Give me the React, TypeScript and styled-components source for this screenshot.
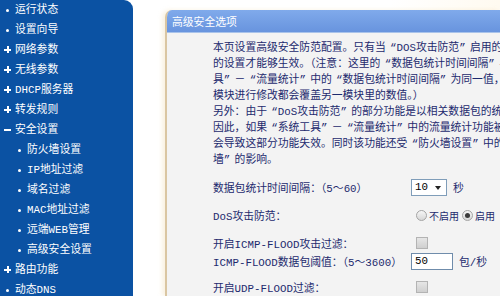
import React from 'react';
import styled, { createGlobalStyle, css } from 'styled-components';

const GlobalStyle = createGlobalStyle`
  html, body {
    margin: 0;
    padding: 0;
    background: #ffffff;
  }
  body {
    font-family: "Liberation Mono", "Noto Sans CJK SC", monospace;
    font-size: 10.8px;
  }
`;

type Mark = 'dot' | 'plus' | 'minus';

interface MenuEntry {
  label: string;
  mark: Mark;
  sub?: boolean;
}

const menu: MenuEntry[] = [
  { label: '运行状态', mark: 'dot' },
  { label: '设置向导', mark: 'dot' },
  { label: '网络参数', mark: 'plus' },
  { label: '无线参数', mark: 'plus' },
  { label: 'DHCP服务器', mark: 'plus' },
  { label: '转发规则', mark: 'plus' },
  { label: '安全设置', mark: 'minus' },
  { label: '防火墙设置', mark: 'dot', sub: true },
  { label: 'IP地址过滤', mark: 'dot', sub: true },
  { label: '域名过滤', mark: 'dot', sub: true },
  { label: 'MAC地址过滤', mark: 'dot', sub: true },
  { label: '远端WEB管理', mark: 'dot', sub: true },
  { label: '高级安全设置', mark: 'dot', sub: true },
  { label: '路由功能', mark: 'plus' },
  { label: '动态DNS', mark: 'dot' },
];

const notice = [
  '本页设置高级安全防范配置。只有当“DOS攻击防范”启用的时候，这里',
  '的设置才能够生效。（注意：这里的“数据包统计时间间隔”与“系统工',
  '具”－“流量统计”中的“数据包统计时间间隔”为同一值，在任何一个',
  '模块进行修改都会覆盖另一模块里的数值。）',
  '另外：由于“DoS攻击防范”的部分功能是以相关数据包的统计为基础，',
  '因此，如果“系统工具”－“流量统计”中的流量统计功能被关闭，将',
  '会导致这部分功能失效。同时该功能还受“防火墙设置”中的“防火',
  '墙”的影响。',
];

// curly quotes get a full-width cell, as the old SimSun pages show them
const withWideQuotes = (text: string) =>
  text.split(/([“”])/).map((part, i) =>
    part === '“' || part === '”' ? (
      <Quote key={i} $open={part === '“'}>
        {part}
      </Quote>
    ) : (
      part
    )
  );

const App: React.FC = () => {
  return (
    <>
      <GlobalStyle />
      <Page>
        <Sidebar>
          {menu.map((item) => (
            <MenuItem key={item.label} $sub={item.sub}>
              <MarkIcon $mark={item.mark} />
              <span>{item.label}</span>
            </MenuItem>
          ))}
        </Sidebar>

        <Main>
          <Panel>
            <PanelHeader>高级安全选项</PanelHeader>
            <PanelBody>
              <Notice>
                {notice.map((line) => (
                  <Line key={line}>{withWideQuotes(line)}</Line>
                ))}
              </Notice>

              <FormRow $gap={10}>
                <Label>数据包统计时间间隔：（5～60）</Label>
                <FakeSelect>
                  10
                  <Arrow />
                </FakeSelect>
                <Unit>秒</Unit>
              </FormRow>

              <FormRow $gap={10}>
                <Label>DoS攻击防范：</Label>
                <Radio />
                <OptionText>不启用</OptionText>
                <Radio $checked $near />
                <OptionText>启用</OptionText>
              </FormRow>

              <FormRow $gap={10}>
                <Label>开启ICMP-FLOOD攻击过滤：</Label>
                <Checkbox />
              </FormRow>

              <FormRow $gap={0}>
                <Label>ICMP-FLOOD数据包阈值：（5～3600）</Label>
                <TextBox>50</TextBox>
                <Unit>包/秒</Unit>
              </FormRow>

              <FormRow $gap={8}>
                <Label>开启UDP-FLOOD过滤：</Label>
                <Checkbox />
              </FormRow>
            </PanelBody>
          </Panel>
        </Main>
      </Page>
    </>
  );
};

const Page = styled.div`
  display: flex;
  width: 500px;
  height: 296px;
  overflow: hidden;
  background: #ffffff;
`;

const Sidebar = styled.nav`
  flex: 0 0 133px;
  background: #0b52a3;
  border-top-right-radius: 9px;
  color: #ffffff;
`;

const MenuItem = styled.div<{ $sub?: boolean }>`
  display: flex;
  align-items: center;
  gap: 2px;
  height: 20px;
  padding-left: ${(p) => (p.$sub ? 13 : 1)}px;
  white-space: nowrap;
  line-height: 20px;
`;

const MarkIcon = styled.span<{ $mark: Mark }>`
  position: relative;
  flex: 0 0 12px;
  height: 12px;

  &::before,
  &::after {
    content: '';
    position: absolute;
    background: #ffffff;
  }

  ${(p) =>
    p.$mark === 'dot' &&
    css`
      &::before {
        left: 5px;
        top: 5px;
        width: 3px;
        height: 3px;
        border-radius: 50%;
      }
      &::after {
        display: none;
      }
    `}

  ${(p) =>
    p.$mark === 'plus' &&
    css`
      &::before {
        left: 3px;
        top: 5px;
        width: 7px;
        height: 2px;
      }
      &::after {
        left: 6px;
        top: 2px;
        width: 2px;
        height: 7px;
      }
    `}

  ${(p) =>
    p.$mark === 'minus' &&
    css`
      &::before {
        left: 3px;
        top: 5px;
        width: 7px;
        height: 2px;
      }
      &::after {
        display: none;
      }
    `}
`;

const Main = styled.main`
  flex: 1;
  min-width: 0;
  display: flex;
  padding: 10px 0 0 32px;
  background: linear-gradient(90deg, #ffffff 70%, #fffaf0);
`;

const Panel = styled.section`
  flex: 1;
  min-width: 0;
  display: flex;
  flex-direction: column;
  border-left: 2px solid #dac6a2;
  border-top-left-radius: 7px;
  background: #f3f3f3;
  box-shadow: -3px 0 4px rgba(238, 214, 168, 0.35);
  overflow: hidden;
`;

const PanelHeader = styled.header`
  display: flex;
  align-items: center;
  height: 22px;
  padding-left: 5px;
  color: #ffffff;
  background: linear-gradient(#80aaeb, #6894de);
  border-bottom: 1px solid #a9c3ea;
  white-space: nowrap;
`;

const PanelBody = styled.div`
  padding: 7px 0 0 46px;
  color: #1d2a6e;
`;

const Notice = styled.div`
  line-height: 16px;
`;

const Line = styled.div`
  white-space: nowrap;
`;

const Quote = styled.span<{ $open: boolean }>`
  display: inline-block;
  width: 1em;
  text-align: ${(p) => (p.$open ? 'right' : 'left')};
`;

const FormRow = styled.div<{ $gap: number }>`
  display: flex;
  align-items: center;
  height: 18px;
  margin-top: ${(p) => p.$gap}px;
  white-space: nowrap;
`;

const Label = styled.span`
  flex: 0 0 198px;
`;

const FakeSelect = styled.div`
  position: relative;
  box-sizing: border-box;
  width: 36px;
  height: 17px;
  padding-left: 3px;
  line-height: 15px;
  color: #000000;
  background: #ffffff;
  border: 1px solid #7f9db9;
`;

const Arrow = styled.span`
  position: absolute;
  right: 5px;
  top: 6px;
  border-left: 3px solid transparent;
  border-right: 3px solid transparent;
  border-top: 4px solid #222222;
`;

const TextBox = styled.div`
  box-sizing: border-box;
  width: 42px;
  height: 17px;
  padding-left: 3px;
  line-height: 15px;
  color: #000000;
  background: #ffffff;
  border: 1px solid #6f8cab;
`;

const Unit = styled.span`
  margin-left: 6px;
`;

const OptionText = styled.span`
  margin-left: 2px;
  font-size: 10px;
`;

const Radio = styled.span<{ $checked?: boolean; $near?: boolean }>`
  position: relative;
  box-sizing: border-box;
  flex: 0 0 11px;
  height: 11px;
  margin-left: ${(p) => (p.$near ? 3 : 5)}px;
  border: 1px solid #a4a4a4;
  border-radius: 50%;
  background: linear-gradient(#f6f6f6, #d6d6d6);

  ${(p) =>
    p.$checked &&
    css`
      &::after {
        content: '';
        position: absolute;
        left: 2px;
        top: 2px;
        width: 5px;
        height: 5px;
        border-radius: 50%;
        background: #3a3a3a;
      }
    `}
`;

const Checkbox = styled.span`
  box-sizing: border-box;
  flex: 0 0 12px;
  height: 12px;
  margin-left: 5px;
  border: 1px solid #b3b3b3;
  background: linear-gradient(#e6e6e6, #cfcfcf);
`;

export default App;
